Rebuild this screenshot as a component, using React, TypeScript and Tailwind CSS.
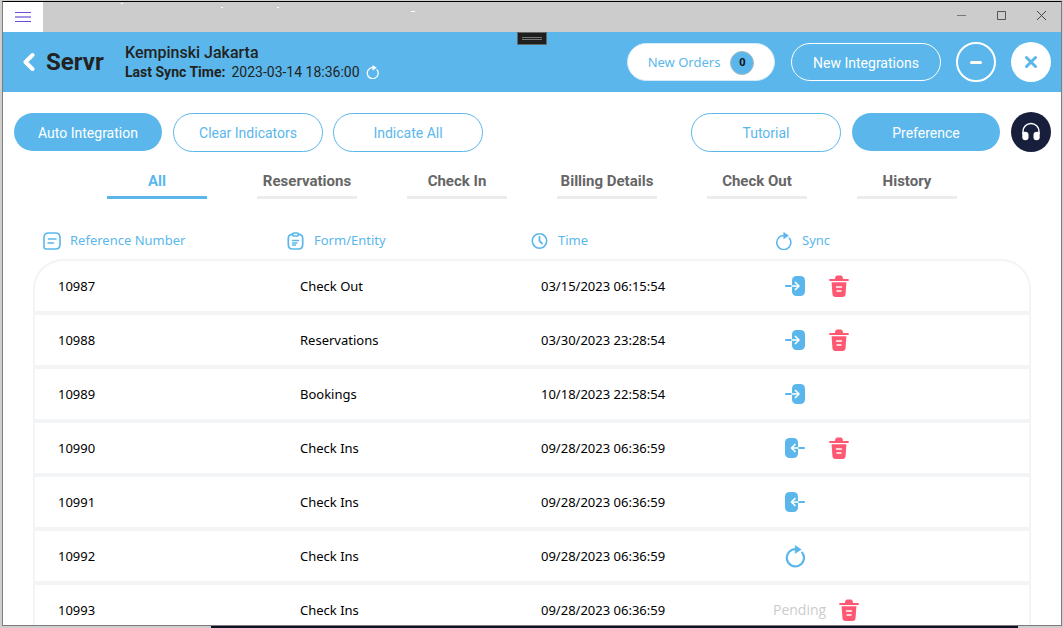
import React from "react";

const BLUE = "#5bb7eb";

type Kind = "in" | "out" | "retry" | "pending";

interface Entry {
  ref: string;
  form: string;
  time: string;
  kind: Kind;
  removable: boolean;
}

const entries: Entry[] = [
  { ref: "10987", form: "Check Out", time: "03/15/2023 06:15:54", kind: "in", removable: true },
  { ref: "10988", form: "Reservations", time: "03/30/2023 23:28:54", kind: "in", removable: true },
  { ref: "10989", form: "Bookings", time: "10/18/2023 22:58:54", kind: "in", removable: false },
  { ref: "10990", form: "Check Ins", time: "09/28/2023 06:36:59", kind: "out", removable: true },
  { ref: "10991", form: "Check Ins", time: "09/28/2023 06:36:59", kind: "out", removable: false },
  { ref: "10992", form: "Check Ins", time: "09/28/2023 06:36:59", kind: "retry", removable: false },
  { ref: "10993", form: "Check Ins", time: "09/28/2023 06:36:59", kind: "pending", removable: true },
];

const tabs = ["All", "Reservations", "Check In", "Billing Details", "Check Out", "History"];

function SyncIcon({ className, width = 1.9 }: { className: string; width?: number }) {
  return (
    <svg viewBox="0 0 20 22" className={className} fill="none" aria-hidden="true">
      <path d="M17.2 7.600A8.600 8.600 0 1 1 11.500 4.300" stroke="currentColor" strokeWidth={width} strokeLinecap="round" />
      <path d="M10.200.4 16.200 4.500 10.200 8.400Z" fill="currentColor" stroke="currentColor" strokeWidth=".6" strokeLinejoin="round" />
    </svg>
  );
}

function NoteIcon() {
  return (
    <svg viewBox="0 0 18 18" className="size-[18px]" fill="none" stroke={BLUE} strokeWidth="1.600" strokeLinecap="round" aria-hidden="true">
      <path d="M5.500 1h7Q17 1 17 5.500v7Q17 17 12.500 17H3Q1 17 1 15V5.500Q1 1 5.500 1Z" />
      <path d="M5.500 7h7.500M5 11h5.500" />
    </svg>
  );
}

function ClipboardIcon() {
  return (
    <svg viewBox="0 0 18 18" className="size-[18px]" fill="none" stroke={BLUE} strokeWidth="1.700" strokeLinecap="round" aria-hidden="true">
      <path d="M5.500 2.300Q1.300 2.300 1.300 6.300V12.500Q1.300 17 5.500 17h6Q15.700 17 15.700 12.500V6.300Q15.700 2.300 11.500 2.300" />
      <rect x="5.500" y="1" width="6" height="3" rx="1.500" />
      <path d="M5.500 8.500h6M5.500 11h4.500M5.500 13h3" strokeWidth="1.400" />
    </svg>
  );
}

function TimeIcon() {
  return (
    <svg viewBox="0 0 18 18" className="size-[18px]" fill="none" stroke={BLUE} strokeLinecap="round" aria-hidden="true">
      <circle cx="8.500" cy="9" r="7.200" strokeWidth="1.600" />
      <path d="M8.500 5v4l2.500 2.500" strokeWidth="1.800" />
    </svg>
  );
}

function InIcon() {
  return (
    <svg viewBox="0 0 20 20" className="size-5" fill="none" strokeLinecap="round" strokeLinejoin="round" aria-hidden="true">
      <rect x="7" y="0" width="13" height="20" rx="4.500" fill={BLUE} />
      <path d="M.8 10H7" stroke={BLUE} strokeWidth="1.800" />
      <path d="M7 10h6.500M10.500 6.500l3.500 3.500-3.500 3.500" stroke="#fff" strokeWidth="1.700" />
    </svg>
  );
}

function OutIcon() {
  return (
    <svg viewBox="0 0 20 20" className="size-5" fill="none" strokeLinecap="round" strokeLinejoin="round" aria-hidden="true">
      <rect x="0" y="0" width="13" height="20" rx="4.500" fill={BLUE} />
      <path d="M13 10h6.200" stroke={BLUE} strokeWidth="1.800" />
      <path d="M13 10H7M10 6.500 6.500 10l3.500 3.500" stroke="#fff" strokeWidth="1.700" />
    </svg>
  );
}

function TrashIcon() {
  return (
    <svg viewBox="0 0 20 22" className="h-[22px] w-5" fill="none" strokeLinecap="round" aria-hidden="true">
      <path d="M6 4Q6.300.5 8 .5h4Q13.700.5 14 4Z" fill="#ff5873" />
      <path d="M1 5h18" stroke="#ff5873" strokeWidth="1.800" />
      <path d="M2.600 7.200h14.800l-.8 11.600Q16.400 22 13.500 22h-7Q3.600 22 3.400 18.800Z" fill="#ff5873" />
      <path d="M7.500 12h5M8 16h4" stroke="#fff" strokeWidth="1.400" />
    </svg>
  );
}

function HeadphonesIcon() {
  return (
    <svg viewBox="0 0 20 20" className="size-5" fill="none" aria-hidden="true">
      <path d="M2 12V9.500a8 8 0 0 1 16 0V12" stroke="#fff" strokeWidth="1.500" />
      <path d="M1.300 12Q1.300 9.800 4 9.800q3.500 0 3.500 3v2.400q0 3-3 3-3.200 0-3.200-3Z" fill="#fff" />
      <path d="M18.700 12q0-2.200-2.700-2.200-3.500 0-3.500 3v2.400q0 3 3 3 3.200 0 3.200-3Z" fill="#fff" />
    </svg>
  );
}

function TitleBar() {
  return (
    <div className="flex h-[30px] shrink-0 items-stretch bg-[#cccccc]">
      <button aria-label="Menu" className="flex w-10 items-center justify-center bg-white">
        <svg viewBox="0 0 16 12" className="h-3 w-4" stroke="#6b4bd8" aria-hidden="true">
          <path d="M0 1.500h16M0 10.500h16" />
          <path d="M0 6h16" strokeWidth="1.200" />
        </svg>
      </button>
      <svg viewBox="0 0 400 12" className="h-3 w-[400px]" fill="#fff" aria-hidden="true">
        <path d="M78 1h2v1h-2zM178 5h2v1h-2zM234 5h2v1h-2zM368 9h4v1h-4z" />
      </svg>
      <div className="ml-auto flex pb-1">
        <button aria-label="Minimize window" className="flex w-10 items-center justify-center">
          <svg viewBox="0 0 10 10" className="size-[10px]" stroke="#777" aria-hidden="true"><path d="M1 5.500h9" /></svg>
        </button>
        <button aria-label="Maximize window" className="flex w-10 items-center justify-center">
          <svg viewBox="0 0 10 10" className="size-[10px]" stroke="#555" fill="none" aria-hidden="true"><path d="M1.500 1.500h8v8h-8z" /></svg>
        </button>
        <button aria-label="Close window" className="flex w-10 items-center justify-center">
          <svg viewBox="0 0 10 10" className="size-[10px]" stroke="#444" aria-hidden="true"><path d="m1 1 9 9M10 1l-9 9" /></svg>
        </button>
      </div>
    </div>
  );
}

function Header() {
  return (
    <header className="relative flex h-[60px] shrink-0 items-center bg-[#5bb7eb] pr-[10px] pl-5 text-[#222]">
      <button aria-label="Back">
        <svg viewBox="0 0 12 20" className="h-5 w-3" fill="none" stroke="#fff" strokeWidth="4" strokeLinecap="round" strokeLinejoin="round" aria-hidden="true">
          <path d="M9.500 3 2.500 10l7 7" />
        </svg>
      </button>
      <div className="ml-[11px] w-[79px] text-2xl leading-7 font-bold">Servr</div>
      <div>
        <h1 className="text-base leading-5 font-medium">Kempinski Jakarta</h1>
        <p className="flex items-center gap-[6px] text-sm leading-[18px]">
          <span className="font-bold">Last Sync Time:</span>
          <span>2023-03-14 18:36:00</span>
          <button aria-label="Sync now" className="text-white"><SyncIcon className="h-[14px] w-[13px]" width={2} /></button>
        </p>
      </div>
      <div className="absolute top-0 left-1/2 flex h-[13px] w-[30px] -translate-x-1/2 items-center justify-center border border-[#666] bg-[#1e1e1e]">
        <span className="h-[3px] w-5 border-y border-[#777]" />
      </div>
      <div className="ml-auto flex items-center gap-[15px]">
        <button className="mr-px flex h-[38px] w-[148px] items-center justify-center gap-[10px] rounded-full border border-[#d5eaf6] bg-white pt-px font-['Noto_Sans',sans-serif] text-[13px] text-[#5bb7eb]">
          New Orders
          <span className="flex size-6 items-center justify-center rounded-full border border-[#a9b8c2] bg-[#5bb7eb] text-[11px] font-bold text-[#111]">0</span>
        </button>
        <button className="h-[38px] w-[150px] rounded-full border border-white pt-[2px] text-sm text-white">New Integrations</button>
        <button aria-label="Minimize" className="flex size-10 items-center justify-center rounded-full border-2 border-white">
          <span className="h-[3px] w-3 rounded-full bg-white" />
        </button>
        <button aria-label="Close" className="flex size-10 items-center justify-center rounded-full bg-white">
          <svg viewBox="0 0 14 14" className="size-[14px]" stroke={BLUE} strokeWidth="3" strokeLinecap="round" aria-hidden="true">
            <path d="m2.500 2.500 9 9m0-9-9 9" />
          </svg>
        </button>
      </div>
    </header>
  );
}

function Pill({ label, filled = false }: { label: string; filled?: boolean }) {
  return (
    <button
      className={
        filled
          ? "h-[38px] w-[148px] rounded-full bg-[#5bb7eb] pt-[2px] text-sm text-white"
          : "h-[39px] w-[150px] rounded-full border border-[#5bb7eb] bg-white pt-px text-sm text-[#5bb7eb]"
      }
    >
      {label}
    </button>
  );
}

function HeadCell({ icon, label }: { icon: React.ReactNode; label: string }) {
  return (
    <th scope="col" className="w-[24.45%] pb-2 pl-[10px] text-left font-normal text-[#5bb7eb]">
      <span className="flex h-5 items-center gap-[9px]">{icon}{label}</span>
    </th>
  );
}

function EntryTable() {
  return (
    <table className="w-full table-fixed border-separate border-spacing-0 font-['Noto_Sans',sans-serif] text-[13px] text-black">
      <thead>
        <tr>
          <HeadCell icon={<NoteIcon />} label="Reference Number" />
          <HeadCell icon={<ClipboardIcon />} label="Form/Entity" />
          <HeadCell icon={<TimeIcon />} label="Time" />
          <th scope="col" className="pb-2 pl-[10px] text-left font-normal text-[#5bb7eb]">
            <span className="flex h-5 items-center gap-[10px]"><SyncIcon className="h-[18px] w-[17px]" />Sync</span>
          </th>
        </tr>
      </thead>
      <tbody className="[&>tr:first-child>td]:h-14 [&>tr:first-child>td]:border-t-2 [&>tr:first-child>td:first-child]:rounded-tl-[30px] [&>tr:first-child>td:last-child]:rounded-tr-[30px]">
        {entries.map((e) => (
          <tr key={e.ref}>
            <td className="h-[54px] border-b-4 border-l-2 border-[#f3f4f6] pt-[2px] pl-[23px]">{e.ref}</td>
            <td className="border-b-4 border-[#f3f4f6] pt-[2px] pl-[23px]">{e.form}</td>
            <td className="border-b-4 border-[#f3f4f6] pt-[2px] pl-5">{e.time}</td>
            <td className="border-r-2 border-b-4 border-[#f3f4f6]">
              <div className={e.kind === "pending" ? "flex items-center gap-[13px] pl-2" : "flex items-center gap-6 pl-5"}>
                {e.kind === "in" && <button aria-label="Sync in"><InIcon /></button>}
                {e.kind === "out" && <button aria-label="Sync out"><OutIcon /></button>}
                {e.kind === "retry" && <button aria-label="Retry" className="text-[#5bb7eb]"><SyncIcon className="h-6 w-5" width={2.2} /></button>}
                {e.kind === "pending" && <span className="font-['Open_Sans',sans-serif] text-sm text-[#cccccc]">Pending</span>}
                {e.removable && <button aria-label={"Delete " + e.ref}><TrashIcon /></button>}
              </div>
            </td>
          </tr>
        ))}
      </tbody>
    </table>
  );
}

export default function App() {
  return (
    <div className="flex h-screen flex-col overflow-hidden bg-[#cfcfcf] pt-px font-[Roboto,sans-serif]">
      <div className="mr-px ml-[2px] flex min-h-0 flex-1 flex-col overflow-hidden border border-[#7c7c7c] border-t-black bg-white">
        <TitleBar />
        <Header />
        <div className="flex shrink-0 items-center gap-[11px] pt-5 pr-[10px] pl-[11px]">
          <Pill label="Auto Integration" filled />
          <div className="flex gap-[10px]">
            <Pill label="Clear Indicators" />
            <Pill label="Indicate All" />
          </div>
          <div className="ml-auto flex items-center gap-[11px]">
            <Pill label="Tutorial" />
            <Pill label="Preference" filled />
            <button aria-label="Support" className="flex size-10 items-center justify-center rounded-full bg-[#181f3d]">
              <HeadphonesIcon />
            </button>
          </div>
        </div>
        <nav className="flex shrink-0 justify-center gap-[50px] pt-[18px]">
          {tabs.map((tab, i) => (
            <button
              key={tab}
              className={
                i === 0
                  ? "flex w-[100px] justify-center border-b-[3px] border-[#5bb7eb] pb-[3px] text-[15px] leading-[23px] font-bold whitespace-nowrap text-[#5bb7eb]"
                  : "flex w-[100px] justify-center border-b-[3px] border-[#ececec] pb-[3px] text-[15px] leading-[23px] font-bold whitespace-nowrap text-[#666]"
              }
            >
              {tab}
            </button>
          ))}
        </nav>
        <main className="min-h-0 flex-1 overflow-hidden px-[30px] pt-8">
          <EntryTable />
        </main>
      </div>
      <div className="flex h-[2px] shrink-0">
        <div className="ml-[19.85%] w-[75.9%] bg-[#0d1226]" />
      </div>
    </div>
  );
}
